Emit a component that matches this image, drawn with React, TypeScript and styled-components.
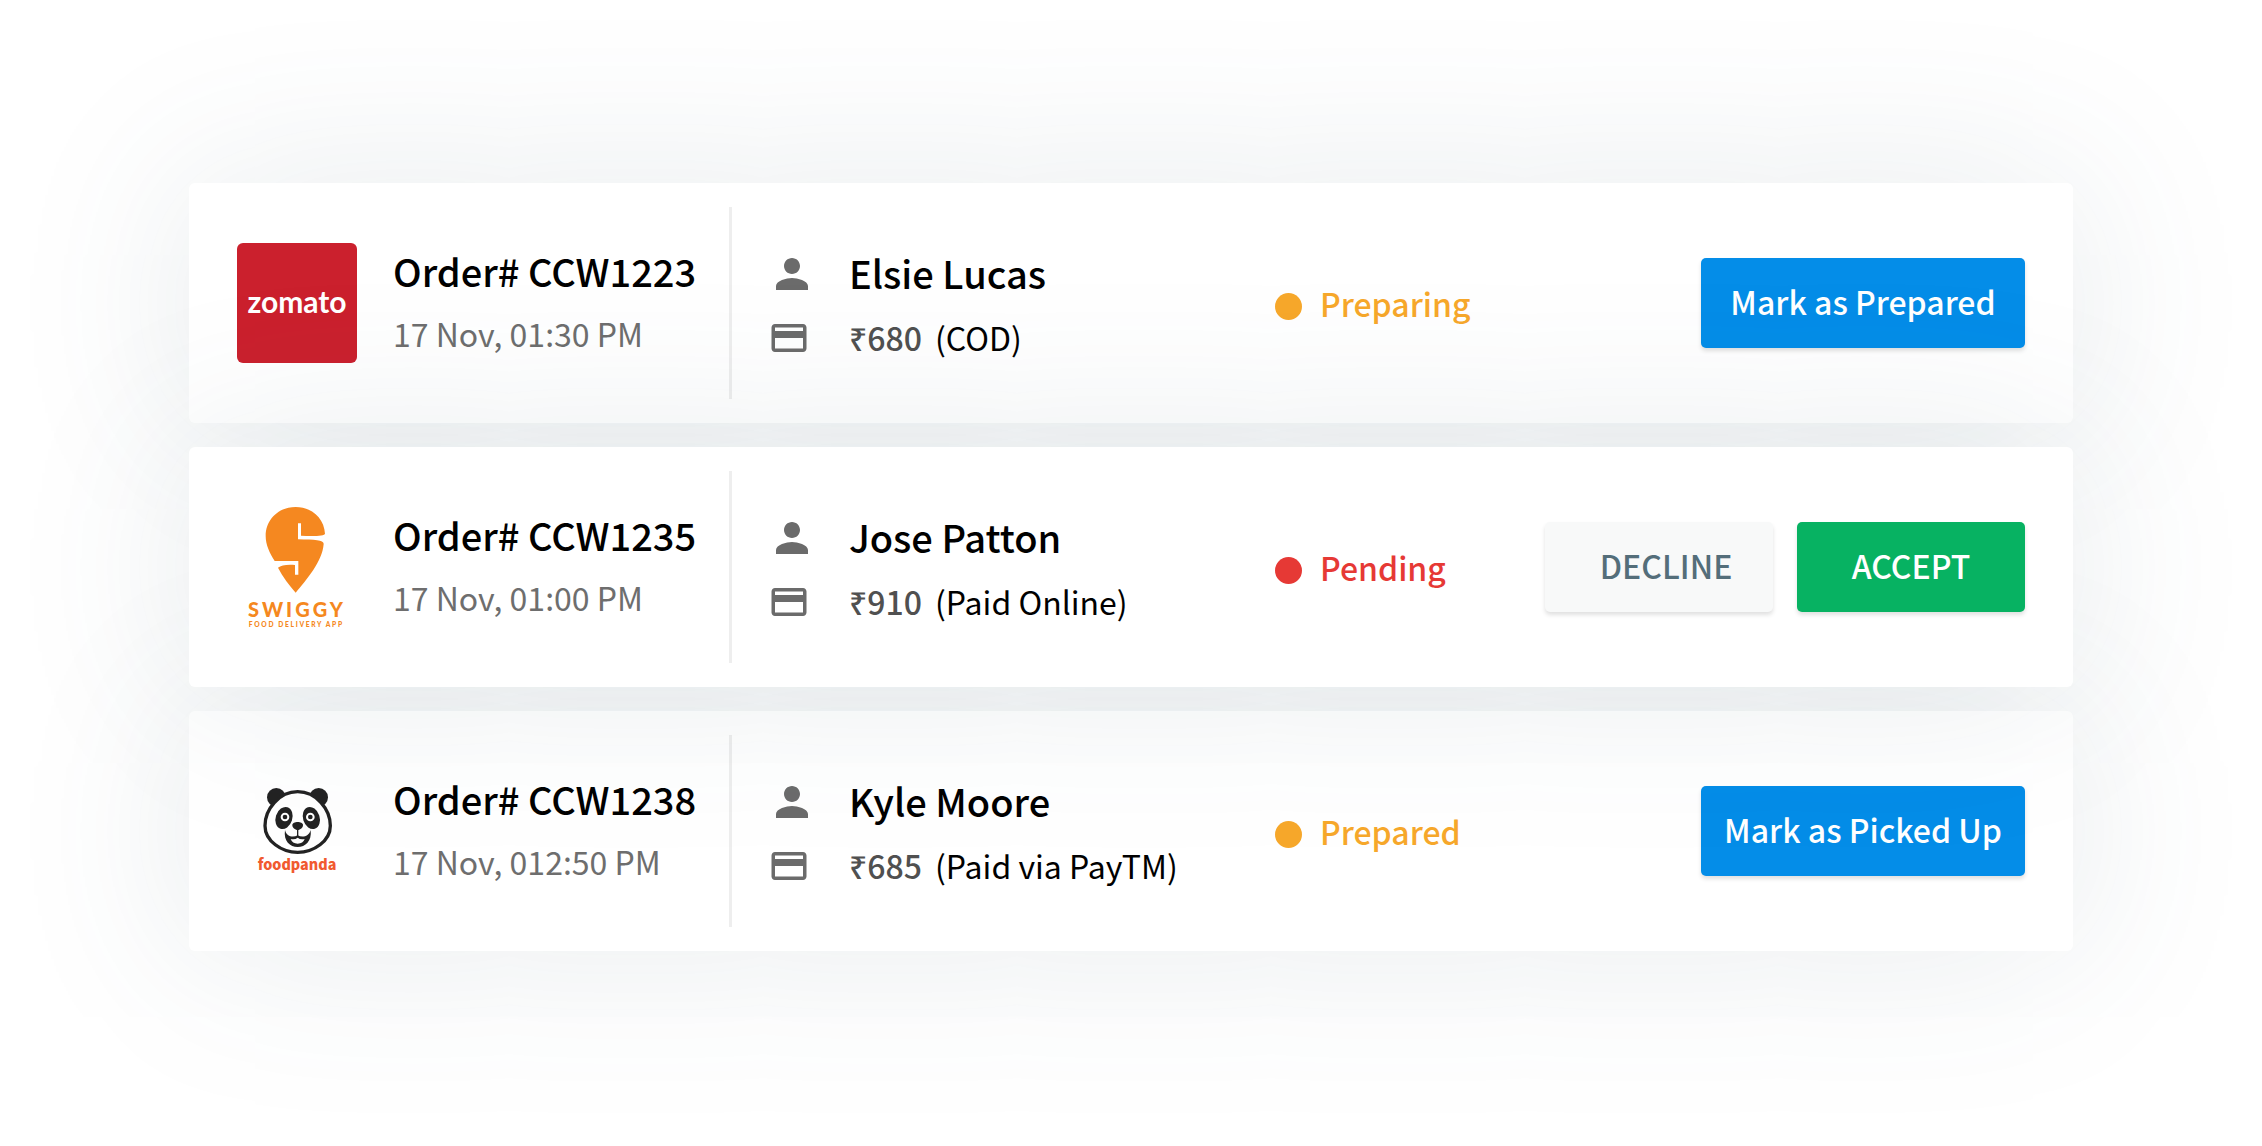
import React from "react";
import styled, { createGlobalStyle } from "styled-components";

const GlobalStyle = createGlobalStyle`
  *, *::before, *::after { box-sizing: border-box; }
  body {
    margin: 0;
    background: #fff;
    color: #000;
    font-family: "Noto Sans CJK SC", "Noto Sans", sans-serif;
    font-size: 32px;
    line-height: 48px;
  }
`;

const OrderList = styled.main`
  display: flex;
  flex-direction: column;
  gap: 24px;
  padding: 183px 189px;
  overflow: hidden;
`;

const OrderCard = styled.article<{ $raised?: boolean }>`
  position: relative;
  z-index: ${(p) => (p.$raised ? 1 : 0)};
  display: grid;
  grid-template-columns: 492px 546px minmax(0, 1fr);
  min-height: 240px;
  padding: 24px 48px;
  border-radius: 6px;
  background: #fff;
  box-shadow: 0 0 180px rgba(62, 96, 112, 0.13);
`;

const Summary = styled.section`
  display: flex;
  align-items: center;
  gap: 36px;
`;

const Heading = styled.h2`
  margin: 0;
  font-size: 38px;
  line-height: 48px;
  font-weight: 500;
  white-space: nowrap;
`;

const SummaryText = styled.div`
  display: flex;
  flex-direction: column;
  gap: 14px;
  padding-bottom: 2px;
`;

const OrderTime = styled.time`
  color: #6e6e6e;
  white-space: nowrap;
`;

const Customer = styled.section`
  display: flex;
  flex-direction: column;
  justify-content: center;
  gap: 16px;
  padding: 4px 0 0 36px;
  border-left: 3px solid #eeeeee;
`;

const DetailRow = styled.div`
  display: grid;
  grid-template-columns: 81px minmax(0, 1fr);
  align-items: center;
  height: 48px;
  white-space: nowrap;

  > :last-child {
    padding-bottom: 2px;
  }
`;

const Payment = styled.p`
  display: flex;
  gap: 13px;
  margin: 0;
`;

const Amount = styled.span`
  color: #505050;
  font-weight: 500;
`;

const Progress = styled.section`
  display: flex;
  align-items: center;
  justify-content: space-between;
`;

const Status = styled.p<{ $color: string }>`
  display: flex;
  align-items: center;
  gap: 18px;
  margin: 0;
  color: ${(p) => p.$color};
  font-weight: 500;

  &::before {
    content: "";
    width: 27px;
    height: 27px;
    margin-top: 6px;
    border-radius: 50%;
    background: currentColor;
  }
`;

const Actions = styled.div`
  display: flex;
  gap: 24px;
`;

const tones = {
  primary: { background: "#048de8", color: "#fff", width: 324, inset: 0 },
  accept: { background: "#07b262", color: "#fff", width: 228, inset: 0 },
  decline: { background: "#f8f9f9", color: "#546e7a", width: 228, inset: 14 },
};

type Tone = keyof typeof tones;

const ActionButton = styled.button<{ $tone: Tone }>`
  width: ${(p) => tones[p.$tone].width}px;
  height: 90px;
  padding: 0 0 4px ${(p) => tones[p.$tone].inset}px;
  border: 0;
  border-radius: 5px;
  background: ${(p) => tones[p.$tone].background};
  color: ${(p) => tones[p.$tone].color};
  box-shadow: 0 3px 4px rgba(0, 0, 0, 0.12);
  font: inherit;
  font-weight: 500;
  white-space: nowrap;
  cursor: pointer;
`;

const ZomatoTile = styled.div`
  display: flex;
  flex: none;
  align-items: center;
  justify-content: center;
  width: 120px;
  height: 120px;
  padding-bottom: 4px;
  border-radius: 6px;
  background: #cb202d;
  color: #fff;
  font-family: Lato, sans-serif;
  font-size: 30px;
  font-weight: 700;
`;

const LogoArt = styled.svg`
  display: block;
  flex: none;
  width: 120px;
  height: 120px;
`;

const Icon = styled.svg<{ $size: number }>`
  display: block;
  width: ${(p) => p.$size}px;
  height: ${(p) => p.$size}px;
  fill: #6b6b6b;
`;

const ZomatoLogo = () => <ZomatoTile>zomato</ZomatoTile>;

const SwiggyLogo = () => (
  <LogoArt viewBox="6 51 360 360" role="img" aria-label="Swiggy" fill="#f58820">
    <path d="M182 51C131 51 92 88 92 138C92 164 104 190 119 213H190V254H180V225C155 223 138 226 129 233C143 260 163 286 182 308C214 270 262 215 266 162C267 150 240 149 189 148V100H198V137C235 139 270 138 270 131C268 86 231 51 182 51Z" />
    <text x="186" y="380" textAnchor="middle" fontFamily="Lato, sans-serif" fontWeight="900" fontSize="60" letterSpacing="9">
      SWIGGY
    </text>
    <text x="184" y="411" textAnchor="middle" fontFamily="Lato, sans-serif" fontWeight="900" fontSize="20" letterSpacing="5">
      FOOD DELIVERY APP
    </text>
  </LogoArt>
);

const FoodpandaLogo = () => (
  <LogoArt viewBox="6 3 360 360" role="img" aria-label="foodpanda" fill="#232323">
    <circle cx="124" cy="82" r="28" />
    <circle cx="251" cy="82" r="28" />
    <path
      d="M188 65C132 65 90 118 90 167C90 213 140 247 188 247C236 247 286 213 286 167C286 118 244 65 188 65Z"
      fill="#fff"
      stroke="#232323"
      strokeWidth="10"
    />
    <ellipse cx="147" cy="144" rx="25" ry="34" transform="rotate(18 147 144)" />
    <ellipse cx="229" cy="144" rx="25" ry="34" transform="rotate(-18 229 144)" />
    <circle cx="150" cy="141" r="13" fill="#fff" />
    <circle cx="226" cy="141" r="13" fill="#fff" />
    <circle cx="150" cy="141" r="7" />
    <circle cx="226" cy="141" r="7" />
    <path d="M172 165C172 153 204 153 204 165C204 173 196 180 188 180C180 180 172 173 172 165Z" />
    <path d="M186 176H190V202H186Z" />
    <path d="M150 180C154 200 174 204 188 196C202 204 222 200 227 180C231 214 211 231 188 231C165 231 145 214 150 180Z" />
    <path d="M167 207Q180 210 188 203Q196 210 209 207Q204 221 188 221Q172 221 167 207Z" fill="#fff" />
    <text x="186" y="301" textAnchor="middle" fontFamily="'Noto Sans CJK SC', sans-serif" fontWeight="900" fontSize="43" fill="#f15a30">
      foodpanda
    </text>
  </LogoArt>
);

const PersonIcon = () => (
  <Icon $size={48} viewBox="0 0 24 24" aria-hidden="true">
    <path d="M12 12c2.21 0 4-1.79 4-4s-1.79-4-4-4-4 1.79-4 4 1.79 4 4 4zm0 2c-2.67 0-8 1.34-8 4v2h16v-2c0-2.66-5.33-4-8-4z" />
  </Icon>
);

const CardIcon = () => (
  <Icon $size={42} viewBox="0 0 24 24" aria-hidden="true">
    <path d="M20 4H4c-1.11 0-1.99.89-1.99 2L2 18c0 1.11.89 2 2 2h16c1.11 0 2-.89 2-2V6c0-1.11-.89-2-2-2zm0 14H4v-6h16v6zm0-10H4V6h16v2z" />
  </Icon>
);

interface Order {
  id: string;
  time: string;
  customer: string;
  amount: string;
  payment: string;
  status: string;
  statusColor: string;
  Logo: React.ComponentType;
  actions: { label: string; tone: Tone }[];
}

const orders: Order[] = [
  {
    id: "CCW1223",
    time: "17 Nov, 01:30 PM",
    customer: "Elsie Lucas",
    amount: "₹680",
    payment: "(COD)",
    status: "Preparing",
    statusColor: "#f7a82b",
    Logo: ZomatoLogo,
    actions: [{ label: "Mark as Prepared", tone: "primary" }],
  },
  {
    id: "CCW1235",
    time: "17 Nov, 01:00 PM",
    customer: "Jose Patton",
    amount: "₹910",
    payment: "(Paid Online)",
    status: "Pending",
    statusColor: "#e63935",
    Logo: SwiggyLogo,
    actions: [
      { label: "DECLINE", tone: "decline" },
      { label: "ACCEPT", tone: "accept" },
    ],
  },
  {
    id: "CCW1238",
    time: "17 Nov, 012:50 PM",
    customer: "Kyle Moore",
    amount: "₹685",
    payment: "(Paid via PayTM)",
    status: "Prepared",
    statusColor: "#f7a82b",
    Logo: FoodpandaLogo,
    actions: [{ label: "Mark as Picked Up", tone: "primary" }],
  },
];

export default function App() {
  return (
    <>
      <GlobalStyle />
      <OrderList>
        {orders.map(({ Logo, ...order }) => (
          <OrderCard key={order.id} $raised={order.status === "Pending"}>
            <Summary>
              <Logo />
              <SummaryText>
                <Heading>Order# {order.id}</Heading>
                <OrderTime>{order.time}</OrderTime>
              </SummaryText>
            </Summary>
            <Customer>
              <DetailRow>
                <PersonIcon />
                <Heading as="h3">{order.customer}</Heading>
              </DetailRow>
              <DetailRow>
                <CardIcon />
                <Payment>
                  <Amount>{order.amount}</Amount>
                  <span>{order.payment}</span>
                </Payment>
              </DetailRow>
            </Customer>
            <Progress>
              <Status $color={order.statusColor}>{order.status}</Status>
              <Actions>
                {order.actions.map((action) => (
                  <ActionButton key={action.label} type="button" $tone={action.tone}>
                    {action.label}
                  </ActionButton>
                ))}
              </Actions>
            </Progress>
          </OrderCard>
        ))}
      </OrderList>
    </>
  );
}
